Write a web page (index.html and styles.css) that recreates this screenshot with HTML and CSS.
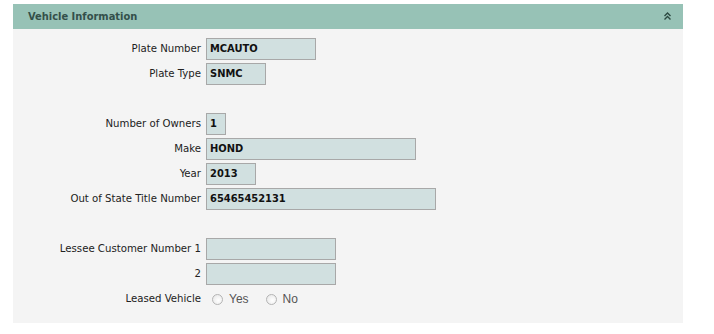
FILE: index.html
```html
<!DOCTYPE html>
<html lang="en">
  <head>
    <meta charset="UTF-8" />
    <title>Vehicle Information</title>
    <link rel="stylesheet" href="styles.css">
  </head>
  <body>
    <section class="panel">
      <header class="panelHead">
        <h2>Vehicle Information</h2>
        <span class="toggle">
          <svg width="7" height="8" viewBox="0 0 7 8">
            <path d="M0.5 4 L3.5 1 L6.5 4 M0.5 7.5 L3.5 4.5 L6.5 7.5" fill="none" stroke="#2c4a42" stroke-width="1.4"/>
          </svg>
        </span>
      </header>
      <div class="panelBody">
        <label>Plate Number</label>
        <div class="felt w110">MCAUTO</div>
        <label>Plate Type</label>
        <div class="felt w60">SNMC</div>
        <div class="spacer"></div>

        <label>Number of Owners</label>
        <div class="felt w20">1</div>
        <label>Make</label>
        <div class="felt w210">HOND</div>
        <label>Year</label>
        <div class="felt w50">2013</div>
        <label>Out of State Title Number</label>
        <div class="felt w230">65465452131</div>
        <div class="spacer"></div>

        <label>Lessee Customer Number 1</label>
        <div class="felt w130"></div>
        <label>2</label>
        <div class="felt w130"></div>
        <label>Leased Vehicle</label>
        <div class="radios">
          <span class="radio"><i></i>Yes</span>
          <span class="radio"><i></i>No</span>
        </div>
      </div>
    </section>
  </body>
</html>
```

FILE: styles.css
```css
body {
  margin: 0;
  padding: 0;
  background: #fff;
  font-family: "DejaVu Sans Condensed", "DejaVu Sans", sans-serif;
  font-size: 11px;
  color: #222;
}

.panel {
  width: 670px;
  margin: 4px 0 0 13px;
}

.panelHead {
  height: 25px;
  background-color: #97c2b6;
  display: flex;
  align-items: center;
  justify-content: space-between;
  padding: 0 12px 0 15px;
}

.panelHead h2 {
  margin: 0;
  font-size: 11px;
  font-weight: bold;
  color: #33504a;
}

.toggle {
  display: flex;
  margin-top: -1px;
}

.panelBody {
  background-color: #f4f4f4;
  padding: 9px 0 13px;
  display: grid;
  grid-template-columns: 188px 1fr;
  grid-auto-rows: 22px;
  column-gap: 5px;
  row-gap: 3px;
}

.panelBody label {
  text-align: right;
  line-height: 22px;
  font-size: 11.3px;
}

.spacer {
  grid-column: 1 / 3;
}

.felt {
  box-sizing: border-box;
  height: 22px;
  border: 1px solid #a8a8a8;
  background-color: #d1e0e0;
  padding-left: 3px;
  line-height: 20px;
  font-weight: bold;
  color: #111;
}

.w20 { width: 20px; }
.w50 { width: 50px; }
.w60 { width: 60px; }
.w110 { width: 110px; }
.w130 { width: 130px; }
.w210 { width: 210px; }
.w230 { width: 230px; }

.radios {
  display: flex;
  align-items: center;
  padding-left: 6px;
  gap: 17px;
  font-family: "Liberation Sans", Arial, sans-serif;
  font-size: 12px;
  color: #555;
}

.radio {
  display: flex;
  align-items: center;
}

.radio i {
  display: inline-block;
  width: 9px;
  height: 9px;
  margin-right: 6px;
  border: 1px solid #b4b4b4;
  border-radius: 50%;
  background: radial-gradient(circle at 60% 60%, #ffffff, #e4e4e4);
}
```
